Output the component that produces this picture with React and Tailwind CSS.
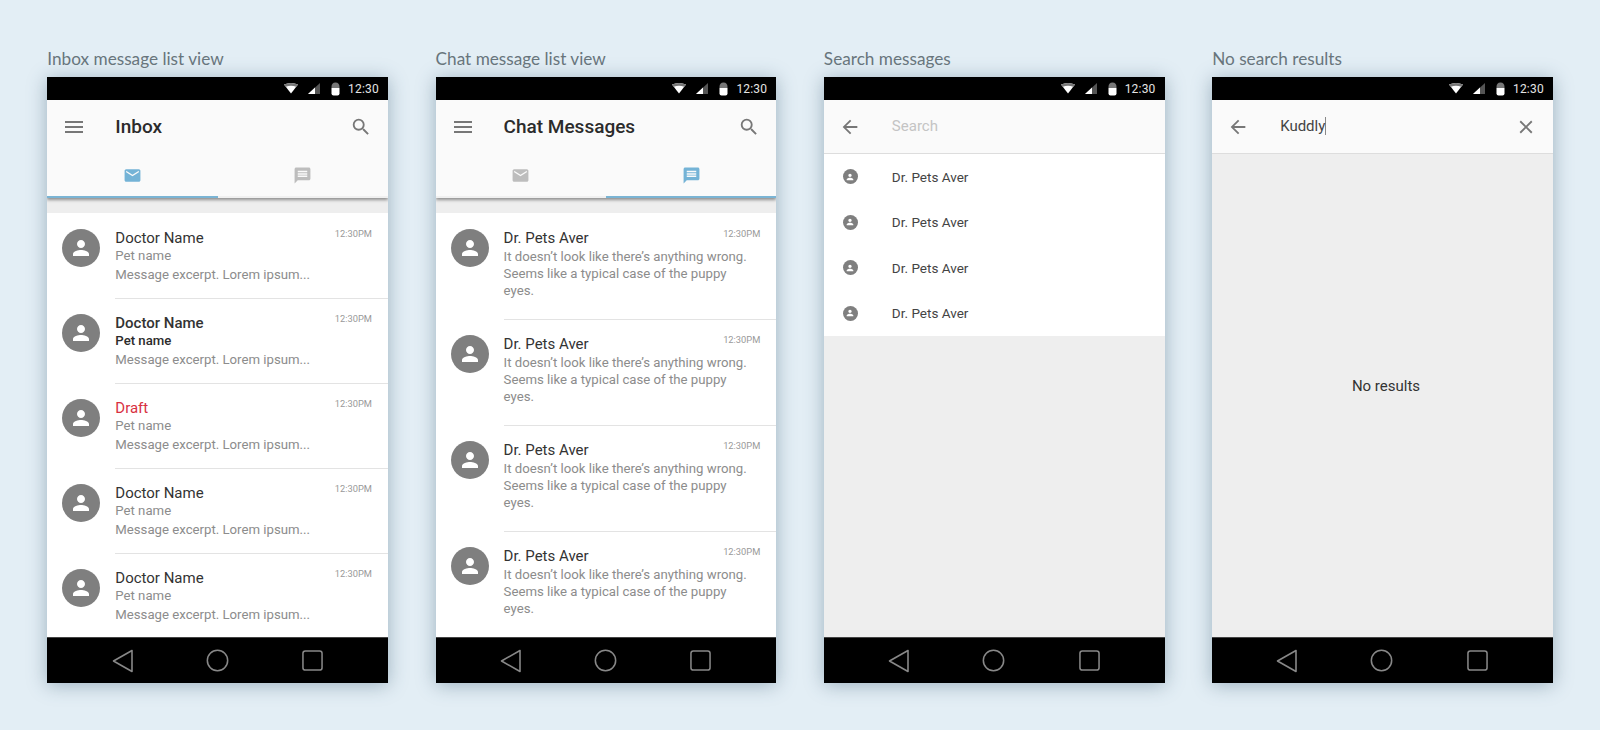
import React from "react";
import { MdMenu, MdSearch, MdEmail, MdMessage, MdArrowBack, MdClose, MdPerson } from "react-icons/md";

const StatusBar = () => (
  <div className="h-[23px] bg-black flex items-center justify-end pr-[9px] shrink-0">
    <svg width="14" height="11" viewBox="0 0 14 11" className="mr-[10px]">
      <path d="M0 1.5 Q7 -1.5 14 1.5 L7 10.5 Z" fill="#fff" />
      <path d="M0 1.5 Q7 -1.5 14 1.5 L12.2 3.8 Q7 1.8 1.8 3.8 Z" fill="#777" />
    </svg>
    <svg width="12" height="11" viewBox="0 0 12 11" className="mr-[11px]">
      <path d="M0 11 L12 0 L12 11 Z" fill="#555" />
      <path d="M0 11 L7 4.6 L7 11 Z" fill="#fff" />
    </svg>
    <svg width="9" height="14" viewBox="0 0 9 14" className="mr-[8px]">
      <path d="M0.5 5 Q0.5 0.5 4.5 0.5 Q8.5 0.5 8.5 5 L8.5 6 L0.5 6 Z" fill="#777" />
      <path d="M0.5 6 L8.5 6 L8.5 11.5 Q8.5 13.5 6.5 13.5 L2.5 13.5 Q0.5 13.5 0.5 11.5 Z" fill="#fff" />
    </svg>
    <span className="text-[12px] text-[#e4e4e4] font-['Roboto',sans-serif] tracking-[0.2px]">12:30</span>
  </div>
);

const NavBar = () => (
  <div className="h-[46px] bg-black border-t border-[#444] flex items-center justify-center shrink-0">
    <div className="w-[95px] flex justify-center">
      <svg width="22" height="24" viewBox="0 0 22 24" fill="none" stroke="#888" strokeWidth="1.6" strokeLinejoin="round">
        <path d="M1.5 12 L20 1.5 L20 22.5 Z" />
      </svg>
    </div>
    <div className="w-[95px] flex justify-center pr-[1px]">
      <svg width="23" height="23" viewBox="0 0 24 24" fill="none" stroke="#888" strokeWidth="1.6">
        <circle cx="12" cy="12" r="10.6" />
      </svg>
    </div>
    <div className="w-[95px] flex justify-center">
      <svg width="21" height="21" viewBox="0 0 22 22" fill="none" stroke="#888" strokeWidth="1.6">
        <rect x="1" y="1" width="20" height="20" rx="2.5" />
      </svg>
    </div>
  </div>
);

const Avatar = () => (
  <div className="w-[38px] h-[38px] mt-[15px] rounded-full bg-[#7f7f7f] flex items-center justify-center shrink-0">
    <MdPerson size={24} color="#fff" />
  </div>
);

const TabHeader = ({ title, active }) => (
  <div className="bg-[#fafafa] shadow-[0_2px_3px_rgba(0,0,0,0.4)] relative z-10 shrink-0">
    <div className="h-[53px] flex items-center pl-[15px] pr-[16px]">
      <MdMenu size={24} color="#777" className="shrink-0" />
      <span className="ml-[29px] pt-[1px] text-[19px] font-medium text-[#2b2b2b] flex-1">{title}</span>
      <MdSearch size={22} color="#777" />
    </div>
    <div className="flex h-[45px]">
      <div className={`flex-1 flex items-center justify-center pt-[2px] border-b-2 ${active === 0 ? "border-[#7ab4d4]" : "border-[#f0f0f0]"}`}>
        <MdEmail size={19} color={active === 0 ? "#74b3d6" : "#bdbdbd"} />
      </div>
      <div className={`flex-1 flex items-center justify-center pt-[2px] border-b-2 ${active === 1 ? "border-[#7ab4d4]" : "border-[#f0f0f0]"}`}>
        <MdMessage size={19} color={active === 1 ? "#74b3d6" : "#bdbdbd"} />
      </div>
    </div>
  </div>
);

const InboxRow = ({ name = "Doctor Name", variant }) => (
  <div className="h-[85px] flex pl-[15px] shrink-0">
    <Avatar />
    <div className="ml-[15px] flex-1 relative border-b border-[#e3e3e3] pt-[14px] pr-[16px]">
      <div className={`text-[15px] leading-[20px] ${variant === "draft" ? "text-[#d8303f]" : "text-[#333]"} ${variant === "bold" ? "font-medium" : ""}`}>{name}</div>
      <div className={`text-[13.2px] leading-[16px] ${variant === "bold" ? "font-medium text-[#2b2b2b]" : "text-[#8c8c8c]"}`}>Pet name</div>
      <div className="text-[13.2px] leading-[18px] mt-[2px] text-[#8c8c8c]">Message excerpt. Lorem ipsum...</div>
      <span className="absolute right-[16px] top-[13px] text-[9.3px] text-[#999]">12:30PM</span>
    </div>
  </div>
);

const ChatRow = () => (
  <div className="h-[106px] flex pl-[15px] shrink-0">
    <Avatar />
    <div className="ml-[15px] flex-1 relative border-b border-[#e3e3e3] pt-[14px] pr-[16px]">
      <div className="text-[15px] leading-[20px] text-[#333]">Dr. Pets Aver</div>
      <div className="text-[13.2px] leading-[17px] text-[#8c8c8c] w-[250px]">
        It doesn’t look like there’s anything wrong. Seems like a typical case of the puppy eyes.
      </div>
      <span className="absolute right-[16px] top-[13px] text-[9.3px] text-[#999]">12:30PM</span>
    </div>
  </div>
);

const SearchRow = () => (
  <div className="h-[45.5px] flex items-center pl-[19px]">
    <div className="w-[15px] h-[15px] rounded-full bg-[#7f7f7f] flex items-center justify-center">
      <MdPerson size={10} color="#fff" />
    </div>
    <span className="ml-[34px] text-[13.5px] text-[#444]">Dr. Pets Aver</span>
  </div>
);

const SearchHeader = ({ children, right }) => (
  <div className="h-[54px] bg-[#fafafa] border-b border-[#ddd] flex items-center pl-[15px] pr-[16px] shrink-0">
    <MdArrowBack size={22} color="#777" className="shrink-0" />
    <div className="ml-[31px] flex-1 pb-[2px]">{children}</div>
    {right}
  </div>
);

const Phone = ({ label, children }) => (
  <div className="w-[340.7px] shrink-0">
    <div className="h-[24px] mb-[7px] text-[17.2px] leading-[26px] text-[#68757c] font-['Lato',sans-serif]">{label}</div>
    <div className="h-[606px] flex flex-col overflow-hidden shadow-[0_2px_18px_rgba(50,85,110,0.4)] font-['Roboto',sans-serif]">
      <StatusBar />
      {children}
      <NavBar />
    </div>
  </div>
);

export default function App() {
  return (
    <div className="w-[1600px] h-[730px] overflow-hidden bg-[#e3eef5] flex gap-[47.6px] pl-[47.3px] pt-[46px]">
      <Phone label="Inbox message list view">
        <TabHeader title="Inbox" active={0} />
        <div className="flex-1 min-h-0 overflow-hidden bg-white flex flex-col">
          <div className="h-[15px] bg-[#eee] shrink-0 mb-[1px]" />
          <InboxRow />
          <InboxRow variant="bold" />
          <InboxRow name="Draft" variant="draft" />
          <InboxRow />
          <InboxRow />
        </div>
      </Phone>

      <Phone label="Chat message list view">
        <TabHeader title="Chat Messages" active={1} />
        <div className="flex-1 min-h-0 overflow-hidden bg-white flex flex-col">
          <div className="h-[15px] bg-[#eee] shrink-0 mb-[1px]" />
          <ChatRow />
          <ChatRow />
          <ChatRow />
          <ChatRow />
        </div>
      </Phone>

      <Phone label="Search messages">
        <SearchHeader>
          <span className="text-[15px] text-[#c4c4c4]">Search</span>
        </SearchHeader>
        <div className="flex-1 min-h-0 bg-[#eee]">
          <div className="bg-white">
            <SearchRow />
            <SearchRow />
            <SearchRow />
            <SearchRow />
          </div>
        </div>
      </Phone>

      <Phone label="No search results">
        <SearchHeader right={<MdClose size={22} color="#777" />}>
          <span className="text-[15px] text-[#444] border-r border-[#888]">Kuddly</span>
        </SearchHeader>
        <div className="flex-1 min-h-0 bg-[#eee] flex items-center justify-center pb-[18px] pl-[7px]">
          <span className="text-[15px] text-[#333]">No results</span>
        </div>
      </Phone>
    </div>
  );
}
